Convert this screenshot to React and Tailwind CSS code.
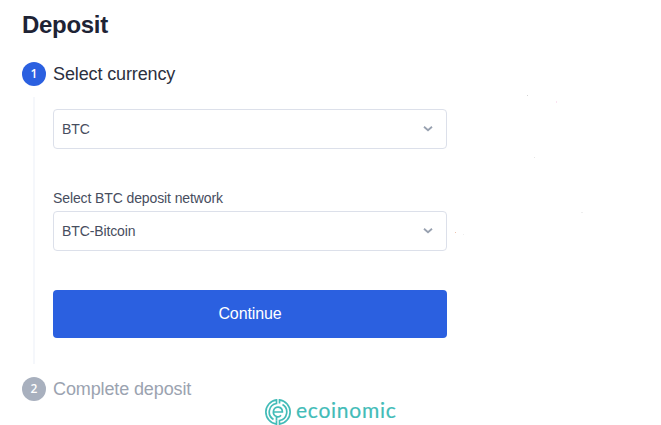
import React from "react";

const App = () => {
  return (
    <div className="h-[425px] w-[661px] overflow-hidden bg-white pl-[22px] font-['Liberation_Sans',Arial,sans-serif]">
      <h1 className="pt-[9px] text-[24px] font-bold leading-8 tracking-[-0.3px] text-[#1e2335]">
        Deposit
      </h1>

      {/* Step 1 */}
      <StepHeader number="1" title="Select currency" active />
      <div className="mt-[11px] ml-[11px] h-[267px] w-[425px] border-l-2 border-[#f5f7fb] pt-3 pl-[18px]">
        <SelectBox value="BTC" />
        <label className="mt-[39px] mb-[3px] block text-sm leading-5 tracking-[-0.11px] text-[#474d5e]">
          Select BTC deposit network
        </label>
        <SelectBox value="BTC-Bitcoin" />
        <button className="mt-[39px] block h-12 w-[394px] rounded bg-[#2b60e0] text-base tracking-[-0.1px] text-white">
          Continue
        </button>
      </div>

      {/* Step 2 */}
      <div className="-mt-2">
        <StepHeader number="2" title="Complete deposit" />
      </div>

      <Brand />
      <Specks />
    </div>
  );
};

const StepHeader = ({ number, title, active }) => (
  <div className="flex items-center gap-[7px] pt-[21px]">
    <span
      className={`flex size-6 items-center justify-center rounded-full font-['Open_Sans',sans-serif] text-xs font-semibold text-white ${
        active ? "bg-[#2b60e0]" : "bg-[#a8b0be]"
      }`}
    >
      {number}
    </span>
    <span
      className={`text-[18px] leading-6 tracking-[-0.12px] ${
        active ? "text-[#2c3040]" : "text-[#9ba3b0]"
      }`}
    >
      {title}
    </span>
  </div>
);

const SelectBox = ({ value }) => (
  <div className="flex h-10 w-[394px] items-center justify-between rounded border border-[#dce0ea] pr-[13px] pl-2 text-sm tracking-[-0.11px] text-[#474d5e]">
    <span>{value}</span>
    <svg width="10" height="6" viewBox="0 0 10 6" fill="none">
      <path d="M1 0.8L5 4.3L9 0.8" stroke="#98a1b0" strokeWidth="1.8" />
    </svg>
  </div>
);

const Brand = () => (
  <div className="-mt-[2px] ml-[243px] flex h-[26px] items-center gap-[5px] text-[#43bcb8]">
    <svg
      width="26"
      height="26"
      viewBox="0 0 26 26"
      fill="none"
      stroke="currentColor"
      strokeWidth="1.7"
    >
      <path d="M14.5 4.4V0.9A12.2 12.2 0 0 1 14.5 25.1V21.5A8.6 8.6 0 0 0 17.5 5.6" />
      <path d="M11.5 21.6V25.1A12.2 12.2 0 0 1 11.5 0.9V4.5A8.6 8.6 0 0 0 8.5 20.4" />
      <path d="M8.6 13H17.4A4.5 4.8 0 1 0 11.5 17.5V21.6M11.5 17.5Q14.2 18.5 16 16.3" />
    </svg>
    <span className="pb-[4px] font-[family-name:'Lato',sans-serif] text-[21px] leading-[22px] tracking-[0.75px] [-webkit-text-stroke:0.2px_#43bcb8]">
      ecoinomic
    </span>
  </div>
);

// Faint specks scattered over the blank right side
const Specks = () => (
  <svg
    className="pointer-events-none absolute top-0 left-0"
    width="661"
    height="425"
  >
    <rect x="527" y="95" width="1" height="1" fill="#d5d5d5" />
    <rect x="556" y="101" width="1" height="2" fill="#fbe3f1" />
    <rect x="534" y="157" width="1" height="1" fill="#e6e6e6" />
    <rect x="581" y="212" width="2" height="1" fill="#eeeeee" />
    <rect x="455" y="232" width="1" height="1" fill="#efc4b0" />
    <rect x="463" y="234" width="1" height="1" fill="#eeeeee" />
  </svg>
);

export default App;
